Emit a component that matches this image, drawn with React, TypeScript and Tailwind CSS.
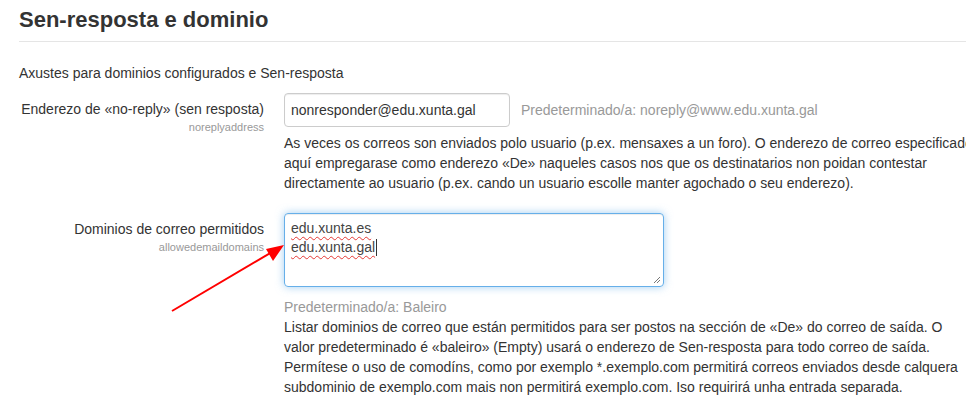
import React from 'react';

const Wavy: React.FC<{ children: React.ReactNode }> = ({ children }) => (
  <span className="underline decoration-wavy decoration-[#e53935] decoration-1 underline-offset-[3px]">{children}</span>
);

export default function App() {
  return (
    <div
      className="relative w-[966px] h-[408px] overflow-hidden bg-white text-[14px] leading-[20px] text-[#333]"
      style={{ fontFamily: '"Liberation Sans", Arial, sans-serif' }}
    >
      <div className="pl-[19px] pt-[7px]">
        <h2 className="text-[22px] leading-[26px] font-bold text-[#333] pb-[8px] border-b border-[#e5e5e5]">
          Sen-resposta e dominio
        </h2>

        <p className="mt-[21px] whitespace-nowrap">Axustes para dominios configurados e Sen-resposta</p>

        {/* noreplyaddress */}
        <div className="flex mt-[10px]">
          <div className="w-[245px] shrink-0 text-right pt-[6px]">
            <div className="whitespace-nowrap">Enderezo de «no-reply» (sen resposta)</div>
            <div className="text-[11px] leading-[14px] text-[#999] mt-[1px]">noreplyaddress</div>
          </div>
          <div className="ml-[20px] flex-1 min-w-0">
            <div className="flex items-center">
              <div className="w-[226px] h-[34px] border border-[#ccc] rounded-[4px] px-[6px] flex items-center shadow-[inset_0_1px_1px_rgba(0,0,0,0.075)] whitespace-nowrap">
                nonresponder@edu.xunta.gal
              </div>
              <span className="ml-[11px] text-[#999] whitespace-nowrap">Predeterminado/a: noreply@www.edu.xunta.gal</span>
            </div>
            <div className="mt-[6px] whitespace-nowrap">
              <div>As veces os correos son enviados polo usuario (p.ex. mensaxes a un foro). O enderezo de correo especificado</div>
              <div>aquí empregarase como enderezo «De» naqueles casos nos que os destinatarios non poidan contestar</div>
              <div>directamente ao usuario (p.ex. cando un usuario escolle manter agochado o seu enderezo).</div>
            </div>
          </div>
        </div>

        {/* allowedemaildomains */}
        <div className="flex mt-[20px]">
          <div className="w-[245px] shrink-0 text-right pt-[6px]">
            <div className="whitespace-nowrap">Dominios de correo permitidos</div>
            <div className="text-[11px] leading-[14px] text-[#999] mt-[1px]">allowedemaildomains</div>
          </div>
          <div className="ml-[20px] flex-1 min-w-0">
            <div className="relative w-[380px] h-[74px] border border-[#66afe9] rounded-[4px] px-[6px] pt-[5px] shadow-[inset_0_1px_1px_rgba(0,0,0,0.075),0_0_8px_rgba(102,175,233,0.6)] leading-[19px] text-[#444]">
              <div><Wavy>edu.xunta.es</Wavy></div>
              <div className="flex items-center">
                <Wavy>edu.xunta.gal</Wavy>
                <span className="inline-block w-px h-[17px] bg-[#333] ml-px" />
              </div>
              <svg className="absolute right-[2px] bottom-[2px]" width="9" height="9" viewBox="0 0 9 9">
                <path d="M8 2 L2 8 M8 5 L5 8" stroke="#777" strokeWidth="1" />
              </svg>
            </div>
            <div className="mt-[10px] text-[#999] whitespace-nowrap">Predeterminado/a: Baleiro</div>
            <div className="whitespace-nowrap">
              <div>Listar dominios de correo que están permitidos para ser postos na sección de «De» do correo de saída. O</div>
              <div>valor predeterminado é «baleiro» (Empty) usará o enderezo de Sen-resposta para todo correo de saída.</div>
              <div>Permítese o uso de comodíns, como por exemplo *.exemplo.com permitirá correos enviados desde calquera</div>
              <div>subdominio de exemplo.com mais non permitirá exemplo.com. Iso requirirá unha entrada separada.</div>
            </div>
          </div>
        </div>
      </div>

      {/* annotation arrow */}
      <svg className="absolute left-0 top-0 pointer-events-none" width="966" height="408">
        <line x1="172" y1="311" x2="272" y2="252" stroke="#ff0000" strokeWidth="2" />
        <polygon points="284,245 266,249 273,261" fill="#ff0000" />
      </svg>
    </div>
  );
}
